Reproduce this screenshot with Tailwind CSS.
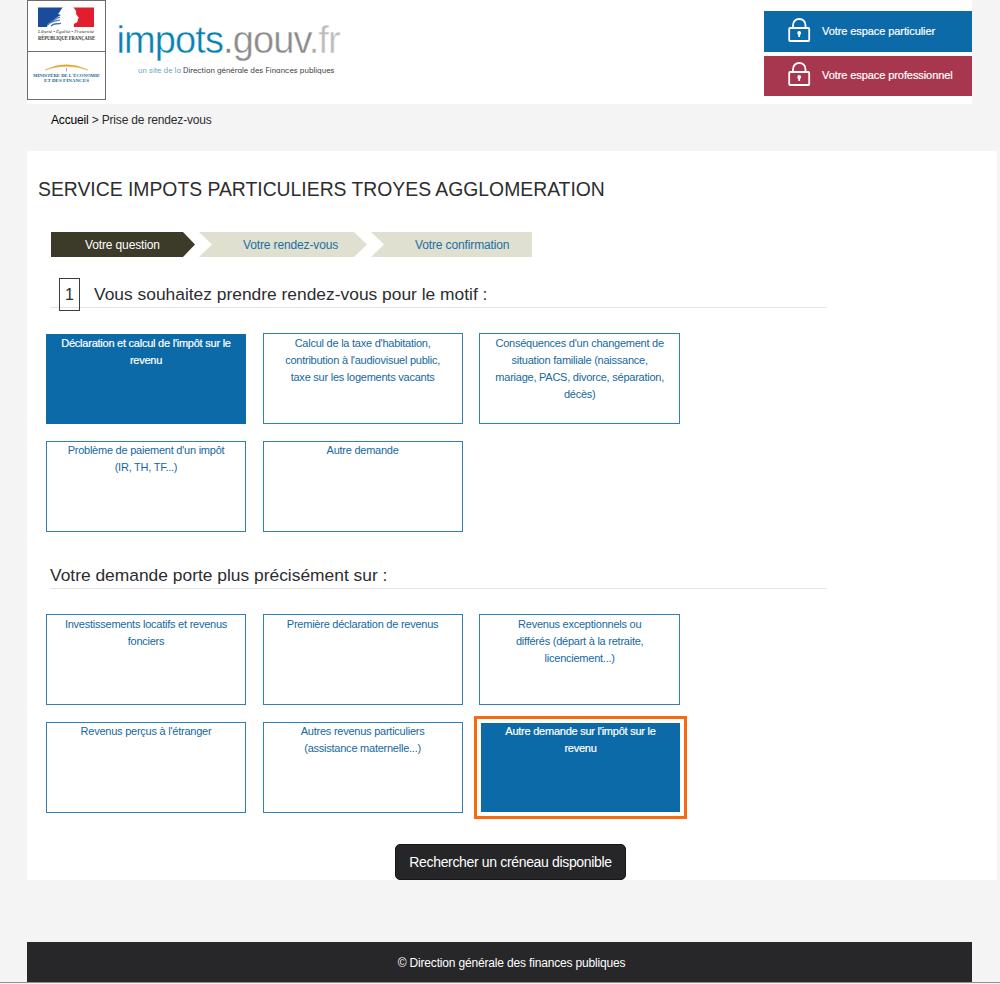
<!DOCTYPE html>
<html lang="fr">
<head>
<meta charset="utf-8">
<title>impots.gouv.fr - Prise de rendez-vous</title>
<script src="https://cdn.jsdelivr.net/npm/@tailwindcss/browser@4"></script>
</head>
<body class="bg-[#f4f4f4] w-[1000px] h-[984px] overflow-hidden font-['Liberation_Sans',Arial,sans-serif] text-[#2d2d2f]">
<div class="h-[983px] border-b border-[#919191] pl-[27px] flex flex-col">
  <header class="w-[945px] h-[104px] shrink-0 bg-white flex justify-between">
    <div class="flex">
      <svg class="w-[79px] h-[100px]" viewBox="0 0 79 100">
        <rect x=".5" y=".5" width="78" height="99" fill="#fff" stroke="#6d6d6d"/>
        <path d="M0 51.500H79" stroke="#6d6d6d"/>
        <path d="M11 7.500H36C33 10 34 11 31 14L34 15C30 17 27 19 25 22C20 23 21 25 20 27H11Z" fill="#1b4b9b"/>
        <path d="M21 25C24 20 29 19 33 17M23 23C27 20 30 21 33 20M24 26C28 22 31 25 34 23" stroke="#4a70b0" stroke-width="1.300" fill="none"/>
        <path d="M46 7.500H67V27H47C46 24 48 23 50 22.500L51 20L50.500 19L52 18L49 14C50 11 48 9 46 7.500Z" fill="#e11f2c"/>
        <g font-family="Liberation Serif, serif" fill="#333">
          <text x="11" y="32.500" font-size="4.800" font-style="italic" textLength="56" lengthAdjust="spacingAndGlyphs">Liberté • Égalité • Fraternité</text>
          <text x="11" y="40.300" font-size="5.200" font-weight="bold" textLength="57" lengthAdjust="spacingAndGlyphs">RÉPUBLIQUE FRANÇAISE</text>
          <g fill="#23678e" font-weight="bold">
            <text x="6" y="77.300" font-size="4.600" textLength="67" lengthAdjust="spacingAndGlyphs">MINISTÈRE DE L'ÉCONOMIE</text>
            <text x="17" y="82" font-size="4.300" textLength="45" lengthAdjust="spacingAndGlyphs">ET DES FINANCES</text>
          </g>
        </g>
        <path d="M18 70Q39 59.500 61 70Q39 62.500 18 70Z" fill="#e2a62d" stroke="#e2a62d" stroke-width=".5"/>
        <path d="M39.500 68V71.500" stroke="#8eb0c5"/>
      </svg>
      <svg class="w-[240px] h-[90px]" viewBox="106 0 240 90">
        <text x="116.500" y="53" font-family="Liberation Sans, sans-serif" font-size="38" letter-spacing="-.9" stroke="#fff" stroke-width=".4"><tspan fill="#0782b3">impots</tspan><tspan fill="#808080">.</tspan><tspan fill="#8b8b8b">gouv</tspan><tspan fill="#aaa">.</tspan><tspan fill="#bdbdbd">fr</tspan></text>
        <g font-family="Inter, sans-serif" font-size="7.300" style="font-feature-settings:'cv11'">
          <text x="138" y="72.500" fill="#6f9fc0" textLength="43" lengthAdjust="spacingAndGlyphs">un site de la</text>
          <text x="183" y="72.500" fill="#3a3a3a" textLength="151.500" lengthAdjust="spacingAndGlyphs">Direction générale des Finances publiques</text>
        </g>
      </svg>
    </div>
    <nav class="w-[208px] pt-[11px] flex flex-col gap-[4px] text-white text-[11px] tracking-[-0.08px]">
      <a class="h-[41px] bg-[#0c6aa8] flex items-center pl-[24px]">
        <svg class="w-[23px] h-[26px] mb-[3px]" viewBox="0 0 23 26" fill="none" stroke="#fff" stroke-width="1.800"><rect x="1.200" y="11" width="20" height="13" rx="1"/><path d="M5 11V8.500C5 4.500 7.500 2 11.200 2S17.500 4.500 17.500 8.500V11"/><circle cx="11.200" cy="16" r="1" fill="#fff"/><path d="M11.200 16V20"/></svg>
        <span class="ml-[11px] whitespace-nowrap [-webkit-text-stroke:0.2px_white]">Votre espace particulier</span>
      </a>
      <a class="h-[40px] bg-[#a6374f] flex items-center pl-[24px]">
        <svg class="w-[23px] h-[26px] mb-[5px]" viewBox="0 0 23 26" fill="none" stroke="#fff" stroke-width="1.800"><rect x="1.200" y="11" width="20" height="13" rx="1"/><path d="M5 11V8.500C5 4.500 7.500 2 11.200 2S17.500 4.500 17.500 8.500V11"/><circle cx="11.200" cy="16" r="1" fill="#fff"/><path d="M11.200 16V20"/></svg>
        <span class="ml-[11px] mb-[2px] whitespace-nowrap [-webkit-text-stroke:0.2px_white]">Votre espace professionnel</span>
      </a>
    </nav>
  </header>
  <div class="h-[47px] shrink-0 pl-[24px] pt-[7px] text-[12px] leading-[18px] tracking-[-0.17px]"><span class="text-black">Accueil</span> &gt; Prise de rendez-vous</div>
  <main class="w-[970px] h-[729px] shrink-0 bg-white flex flex-col">
    <h1 class="pl-[11px] mt-[24px] h-[28px] text-[19.350px] leading-[28px] whitespace-nowrap">SERVICE IMPOTS PARTICULIERS TROYES AGGLOMERATION</h1>
    <div class="mt-[29px] ml-[24px] h-[25px] shrink-0 flex gap-[4px] text-[12px] leading-[26px] tracking-[-0.13px] text-[#1b6fa5]">
      <div class="w-[144px] pl-[34px] bg-[#3c3a29] text-white [clip-path:polygon(0_0,132px_0,100%_50%,132px_100%,0_100%)]">Votre question</div>
      <div class="w-[168px] pl-[44px] bg-[#dfe0d0] [clip-path:polygon(0_0,155px_0,100%_50%,155px_100%,0_100%,13px_50%)]">Votre rendez-vous</div>
      <div class="w-[161px] pl-[44px] bg-[#dfe0d0] [clip-path:polygon(0_0,100%_0,100%_100%,0_100%,13px_50%)]">Votre confirmation</div>
    </div>
    <div class="ml-[23px] w-[776px] mt-[21px] h-[30px] shrink-0 border-b border-[#e4e4e4] flex text-[17.400px] leading-[32px] whitespace-nowrap">
      <span class="ml-[9px] w-[21px] h-[33px] border border-[#3b3b3d] text-center leading-[31px] text-[16px]">1</span>
      <h2 class="ml-[14px]">Vous souhaitez prendre rendez-vous pour le motif :</h2>
    </div>
    <div class="ml-[19px] mt-[25px] grid grid-cols-[200px_200px_201px] auto-rows-[91px] gap-x-[16.600px] gap-y-[17px] text-center text-[11px] leading-[17.300px] tracking-[-0.24px] text-[#1668a0] whitespace-nowrap">
      <div class="mt-px pt-[0.500px] bg-[#0c6aa8] text-white [-webkit-text-stroke:0.2px_white]">Déclaration et calcul de l'impôt sur le<br>revenu</div>
      <div class="border border-[#2f80b6] pt-[0.500px]">Calcul de la taxe d'habitation,<br>contribution à l'audiovisuel public,<br>taxe sur les logements vacants</div>
      <div class="border border-[#2f80b6] pt-[0.500px]">Conséquences d'un changement de<br>situation familiale (naissance,<br>mariage, PACS, divorce, séparation,<br>décès)</div>
      <div class="border border-[#2f80b6]">Problème de paiement d'un impôt<br>(IR, TH, TF...)</div>
      <div class="border border-[#2f80b6]">Autre demande</div>
    </div>
    <h2 class="ml-[23px] w-[776px] mt-[30px] h-[27px] shrink-0 border-b border-[#e4e4e4] text-[17.400px] leading-[26px] whitespace-nowrap">Votre demande porte plus précisément sur :</h2>
    <div class="ml-[19px] mt-[25px] grid grid-cols-[200px_200px_201px] auto-rows-[91px] gap-x-[16.600px] gap-y-[17px] text-center text-[11px] leading-[17.300px] tracking-[-0.24px] text-[#1668a0] whitespace-nowrap">
      <div class="border border-[#2f80b6] pt-[0.500px]">Investissements locatifs et revenus<br>fonciers</div>
      <div class="border border-[#2f80b6] pt-[0.500px]">Première déclaration de revenus</div>
      <div class="border border-[#2f80b6] pt-[0.500px]">Revenus exceptionnels ou<br>différés (départ à la retraite,<br>licenciement...)</div>
      <div class="border border-[#2f80b6]">Revenus perçus à l'étranger</div>
      <div class="border border-[#2f80b6]">Autres revenus particuliers<br>(assistance maternelle...)</div>
      <div class="my-px ml-[1.600px] bg-[#0c6aa8] text-white [-webkit-text-stroke:0.2px_white] outline-solid outline-[#f96a10] outline-3 outline-offset-4">Autre demande sur l'impôt sur le<br>revenu</div>
    </div>
    <button class="ml-[368px] mt-[31px] w-[231px] h-[36px] shrink-0 rounded-[5px] bg-[#262628] border border-[#171719] text-white text-[14px] tracking-[-0.340px] whitespace-nowrap">Rechercher un créneau disponible</button>
  </main>
  <footer class="mt-[62px] w-[945px] h-[40px] shrink-0 bg-[#272729] text-white text-[12px] tracking-[-0.17px] leading-[42px] text-center pl-[24px]">© Direction générale des finances publiques</footer>
</div>
</body>
</html>
